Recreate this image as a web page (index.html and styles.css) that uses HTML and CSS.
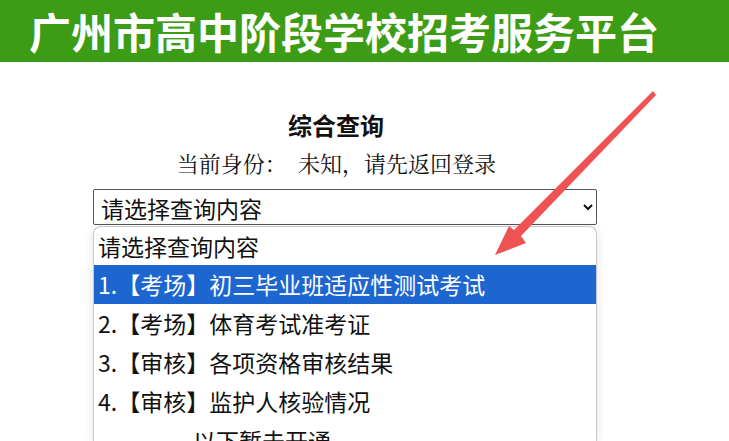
FILE: index.html
```html
<!DOCTYPE html>
<html>
<head>
    <meta charset="UTF-8">
    <meta name="viewport" content="width=device-width, initial-scale=1.0">
    <title>综合查询</title>
    <link rel="stylesheet" href="styles.css">
</head>
<body>
    <div class="header">
        <h1>广州市高中阶段学校招考服务平台</h1>
    </div>

    <div class="container">
        <h2 class="title">综合查询</h2>
        <div class="identity">当前身份：&nbsp;&nbsp;未知，请先返回登录</div>

        <select class="query-select">
            <option>请选择查询内容</option>
        </select>

        <div class="option-list">
            <div class="option">请选择查询内容</div>
            <div class="option active">1.【考场】初三毕业班适应性测试考试</div>
            <div class="option">2.【考场】体育考试准考证</div>
            <div class="option">3.【审核】各项资格审核结果</div>
            <div class="option">4.【审核】监护人核验情况</div>
            <div class="option disabled">以下暂未开通</div>
        </div>
    </div>

    <svg class="pointer" width="729" height="441" viewBox="0 0 729 441">
        <polygon points="653,91 656,95 521,236 526,243 495,255 509,226 514,230" fill="#ef5252"/>
    </svg>
</body>
</html>
```

FILE: styles.css
```css
body {
    margin: 0;
    width: 729px;
    height: 441px;
    overflow: hidden;
    background: #fff;
    font-family: "Noto Sans CJK SC", sans-serif;
    color: #111;
}

.header {
    height: 62px;
    background: #3d9c16;
    padding-left: 29px;
    box-sizing: border-box;
}

.header h1 {
    margin: 0;
    font-size: 42px;
    line-height: 62px;
    font-weight: 700;
    color: #fff;
}

.container {
    width: 504px;
    margin-left: 93px;
    padding-top: 45px;
}

.title {
    margin: 0;
    text-align: center;
    font-size: 24px;
    line-height: 36px;
    font-weight: 700;
    padding-right: 18px;
}

.identity {
    text-align: center;
    font-family: "Noto Serif CJK SC", "Liberation Serif", serif;
    font-size: 22px;
    line-height: 34px;
    padding-right: 17px;
    margin-top: 3px;
    margin-bottom: 9px;
}

.query-select {
    display: block;
    width: 504px;
    height: 36px;
    margin: 0;
    padding: 0 3px;
    font-family: inherit;
    font-size: 23px;
    color: #111;
    background: #fff;
    border: 1px solid #555;
    border-radius: 2px;
}

.option-list {
    margin-top: 1px;
    border: 1px solid #c9c9c9;
    border-bottom: none;
    border-radius: 8px 8px 0 0;
    box-shadow: 0 2px 10px rgba(0, 0, 0, 0.12);
    height: 214px;
    overflow: hidden;
    background: #fff;
}

.option {
    height: 39px;
    line-height: 39px;
    padding-left: 4px;
    font-size: 23px;
    white-space: nowrap;
}

.option:first-child {
    height: 38px;
}

.option.active {
    background: #1d66cf;
    color: #fff;
}

.option.disabled {
    padding-left: 99px;
}

.pointer {
    position: absolute;
    top: 0;
    left: 0;
    pointer-events: none;
}
```
